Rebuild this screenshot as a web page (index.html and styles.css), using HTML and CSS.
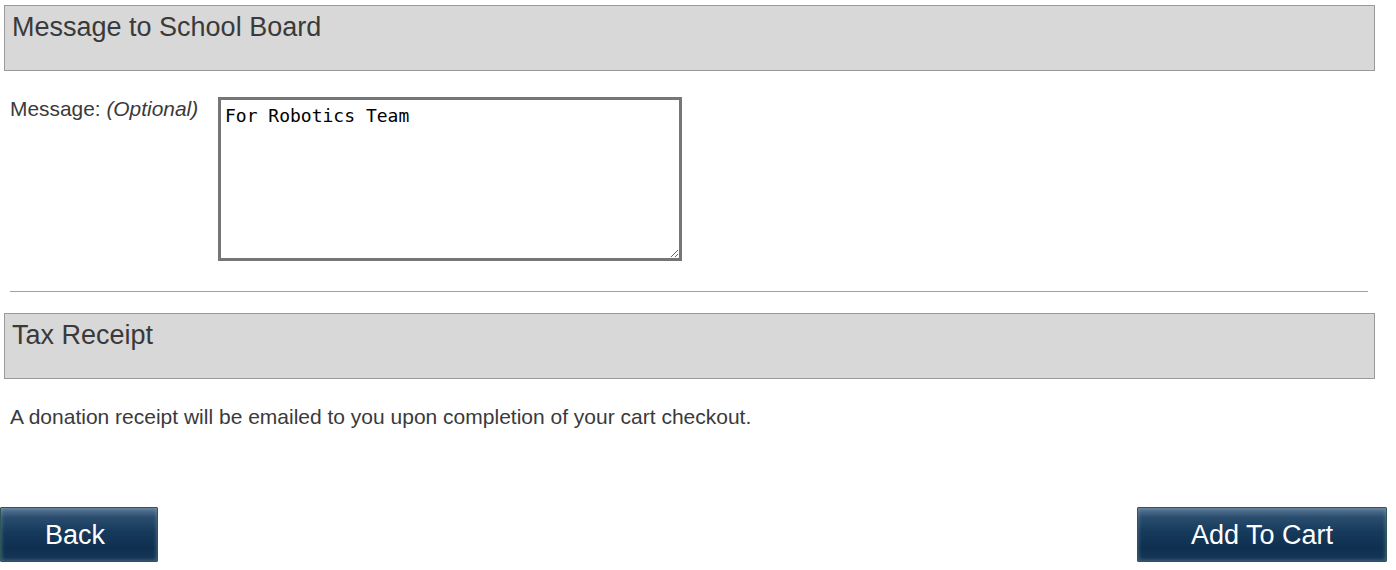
FILE: index.html
```html
<!DOCTYPE html>
<html>
<head>
<meta charset="utf-8">
<link rel="stylesheet" href="styles.css">
</head>
<body>
<div class="page">
  <div class="section-head">Message to School Board</div>
  <div class="form-row">
    <label class="field-label" for="msg">Message: <em>(Optional)</em></label>
    <textarea id="msg" class="msg-box">For Robotics Team</textarea>
  </div>
  <hr class="divider">
  <div class="section-head">Tax Receipt</div>
  <p class="note">A donation receipt will be emailed to you upon completion of your cart checkout.</p>
  <div class="actions">
    <button class="btn btn-back">Back</button>
    <button class="btn btn-add">Add To Cart</button>
  </div>
</div>
</body>
</html>
```

FILE: styles.css
```css
html, body {
  margin: 0;
  padding: 0;
  background: #ffffff;
}
body {
  font-family: "Liberation Sans", Arial, sans-serif;
  color: #333333;
  width: 1396px;
  height: 570px;
  overflow: hidden;
}
.page {
  padding-top: 5px;
}
.section-head {
  margin: 0 21px 0 4px;
  height: 58px;
  padding: 6px 7px 0 7px;
  border: 1px solid #9a9a9a;
  background: #d8d8d8;
  font-size: 27px;
  line-height: 31px;
  color: #3a3a3a;
}
.form-row {
  display: flex;
  align-items: flex-start;
  margin-top: 26px;
}
.field-label {
  width: 208px;
  padding-left: 10px;
  font-size: 20.9px;
  line-height: 24px;
  color: #3a3a3a;
}
.field-label em {
  font-style: italic;
}
.msg-box {
  box-sizing: border-box;
  width: 464px;
  height: 164px;
  margin: 0;
  border: 3px solid #767676;
  padding: 5px 4px;
  font-family: "DejaVu Sans Mono", "Liberation Mono", monospace;
  font-size: 18px;
  line-height: 21px;
  color: #000000;
  background: #ffffff;
  resize: both;
  outline: none;
}
.divider {
  margin: 30px 28px 21px 10px;
  border: 0;
  border-top: 1px solid #a0a0a0;
  height: 0;
}
.note {
  margin: 26px 0 0 10px;
  font-size: 21px;
  line-height: 24px;
  color: #3a3a3a;
}
.actions {
  display: flex;
  justify-content: space-between;
  margin-top: 78px;
  padding-right: 9px;
}
.btn {
  box-sizing: border-box;
  height: 55px;
  border: 1px solid #2a5855;
  border-radius: 1px;
  background: linear-gradient(to bottom, #5a7894 0%, #2a4d6e 18%, #163a5c 45%, #0f2f4f 75%, #163858 100%);
  box-shadow: inset 0 0 4px rgba(160, 190, 210, 0.45);
  color: #ffffff;
  font-family: "Liberation Sans", Arial, sans-serif;
  font-size: 27px;
  line-height: 30px;
  padding: 0;
  cursor: pointer;
}
.btn-back {
  width: 158px;
  padding-right: 8px;
}
.btn-add {
  width: 250px;
}
```
